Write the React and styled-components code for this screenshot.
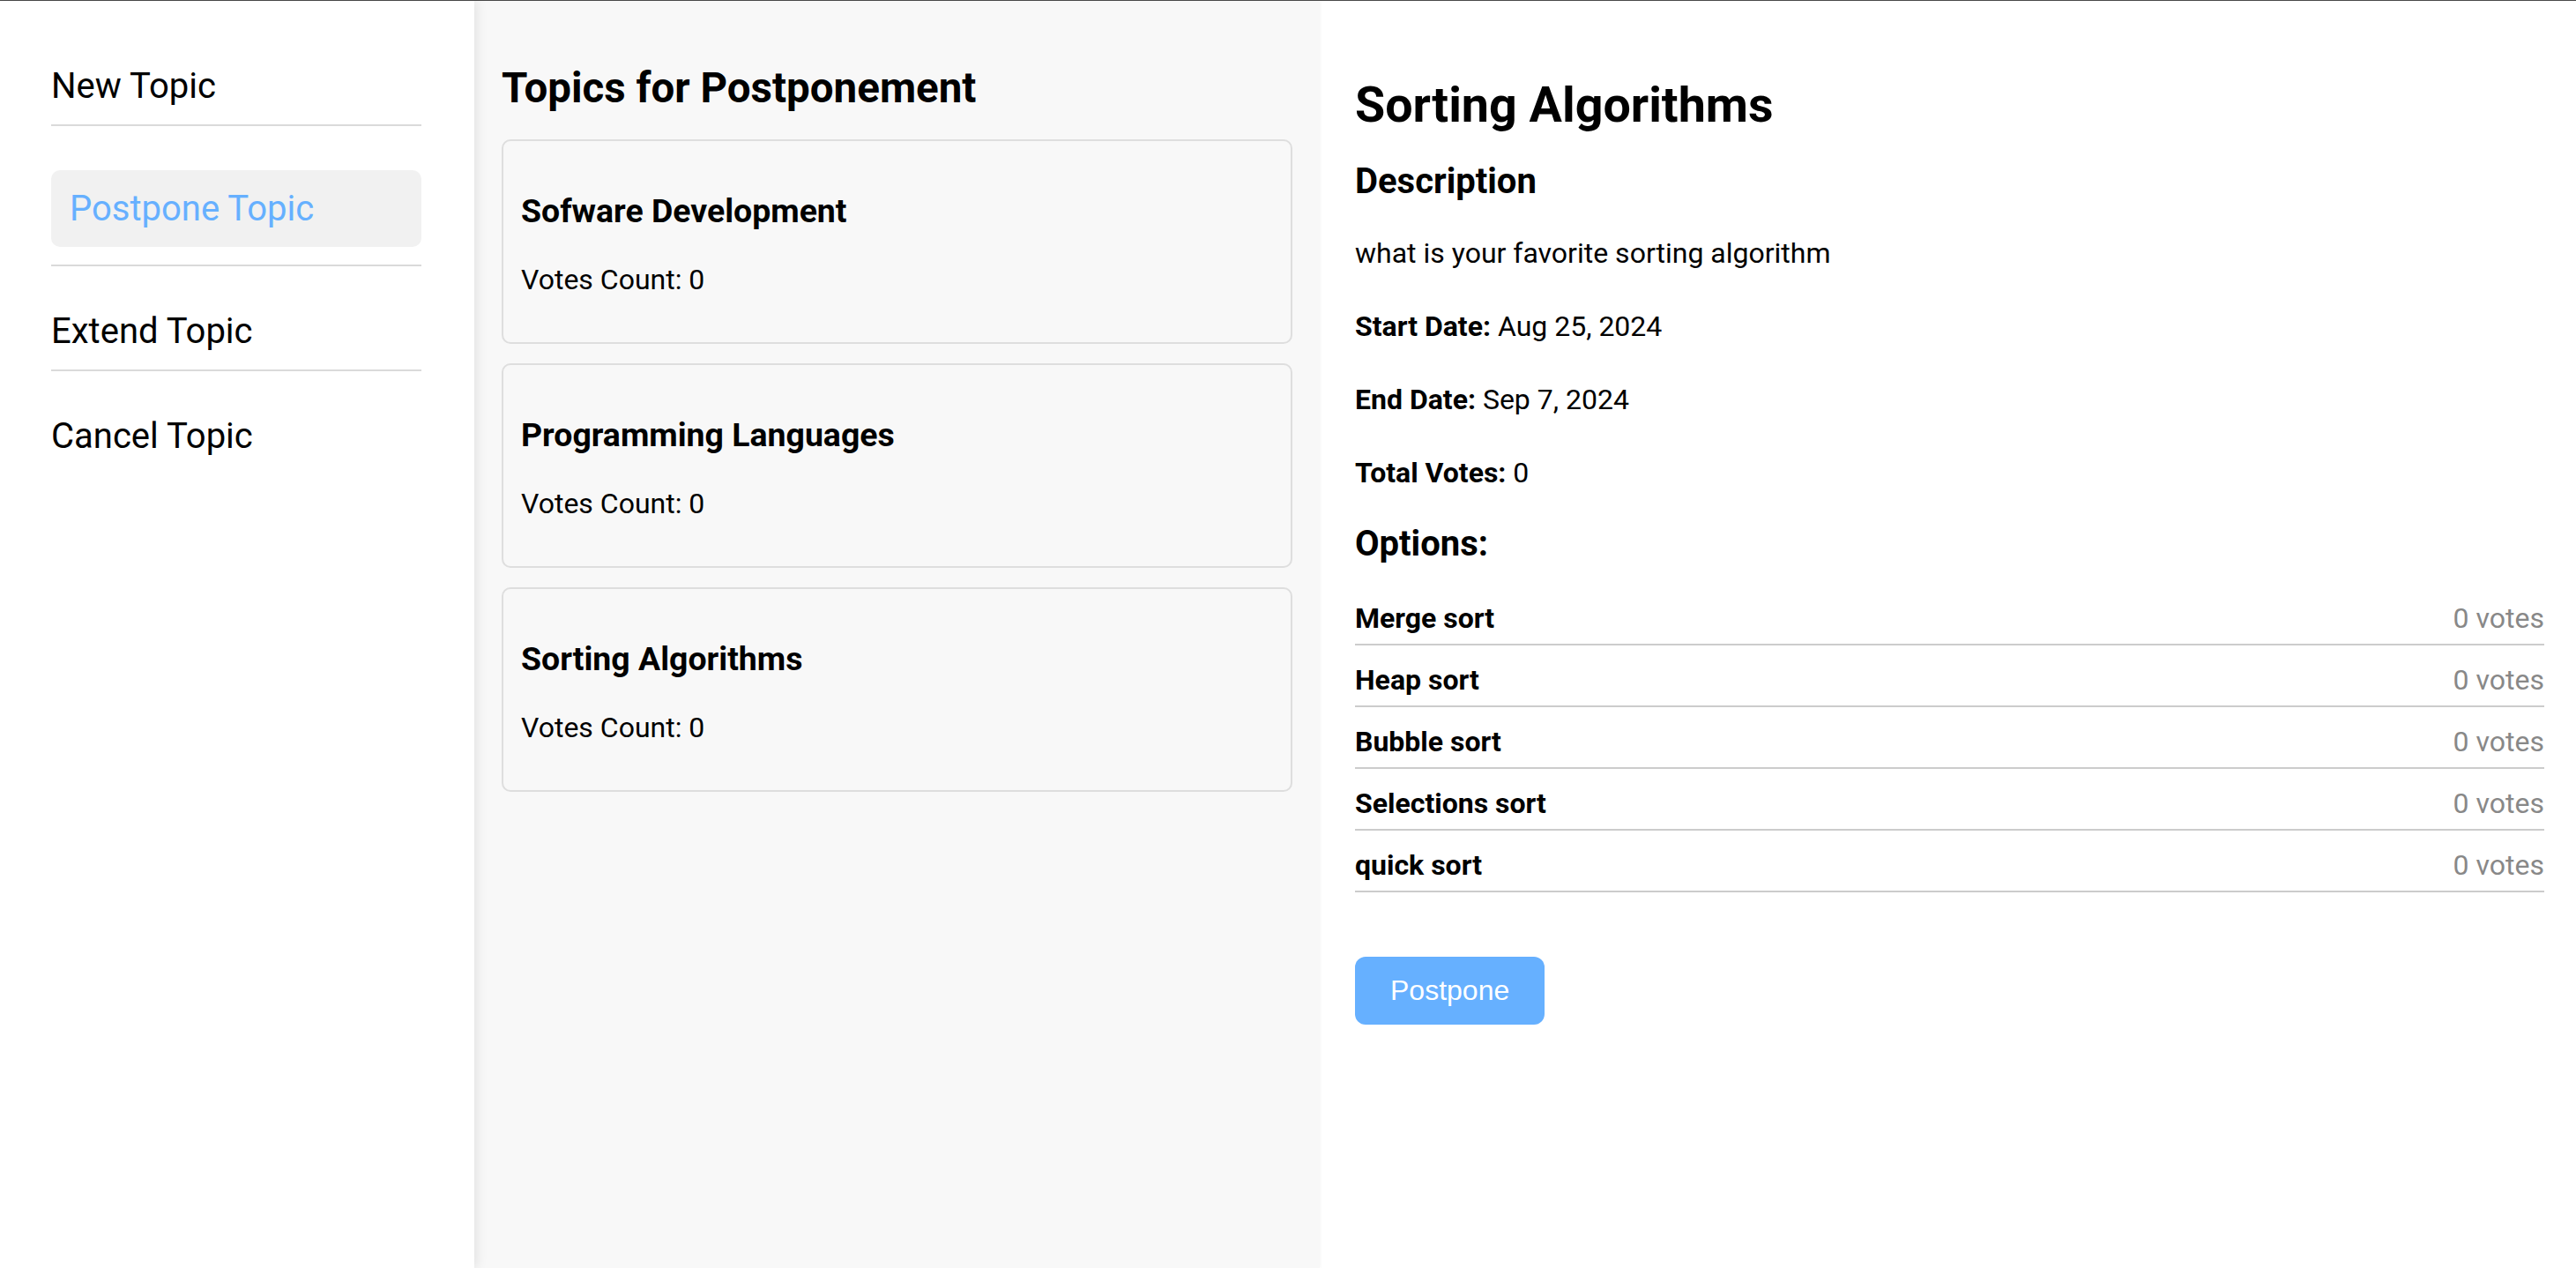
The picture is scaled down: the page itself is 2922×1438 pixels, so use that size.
import React from "react";
import styled, { createGlobalStyle } from "styled-components";

const GlobalStyle = createGlobalStyle`
  html, body { margin: 0; padding: 0; background: #ffffff; }
  body { font-family: Roboto, "Liberation Sans", Arial, sans-serif; color: #000; }
  * { box-sizing: border-box; }
`;

const Layout = styled.div`
  display: flex;
  min-height: 100vh;
  border-top: 1px solid #4a4a4a;
`;

const Sidebar = styled.nav`
  position: relative;
  z-index: 2;
  flex: 0 0 538px;
  background: #ffffff;
  padding: 23px 60px 0 58px;
  box-shadow: 3px 0 12px rgba(0, 0, 0, 0.09);
`;

const NavList = styled.ul`
  list-style: none;
  margin: 0;
  padding: 0;
`;

const NavItem = styled.li`
  padding: 50px 0 20px;
  border-bottom: 2px solid #dadada;
  &:last-child { border-bottom: none; }
`;

const NavLink = styled.a`
  display: block;
  font-size: 40px;
  line-height: normal;
  text-decoration: none;
  color: ${(p) => (p.$active ? "#66b0ff" : "#000000")};
  background: ${(p) => (p.$active ? "#f1f1f1" : "transparent")};
  border-radius: 10px;
  padding: ${(p) => (p.$active ? "20px 21px" : "0")};
  cursor: pointer;
`;

const ListPanel = styled.section`
  position: relative;
  z-index: 1;
  flex: 0 0 959px;
  background: #f8f8f8;
  padding: 71px 31px 40px;
  box-shadow: 1px 0 3px rgba(0, 0, 0, 0.04);
`;

const PanelTitle = styled.h2`
  margin: 0 0 30px;
  font-size: 47.5px;
  font-weight: 700;
  line-height: normal;
`;

const TopicCard = styled.div`
  border: 2px solid #dedede;
  border-radius: 10px;
  padding: 20px;
  margin-bottom: 22px;
  background: #f8f8f8;
  cursor: pointer;
`;

const CardTitle = styled.h3`
  margin: 37px 0;
  font-size: 37.44px;
  font-weight: 700;
  line-height: normal;
`;

const CardText = styled.p`
  margin: 32px 0;
  font-size: 32px;
  line-height: normal;
`;

const DetailPanel = styled.section`
  flex: 1 1 auto;
  background: #ffffff;
  padding: 85px 36px 40px 40px;
  display: flex;
  flex-direction: column;
  align-items: stretch;
`;

const DetailTitle = styled.h1`
  margin: 0 0 30px;
  font-size: 55.6px;
  font-weight: 700;
  line-height: normal;
`;

const SectionHeading = styled.h3`
  margin: 0 0 ${(p) => p.$after}px;
  font-size: 40px;
  font-weight: 700;
  line-height: normal;
`;

const InfoLine = styled.p`
  margin: 0 0 ${(p) => p.$after ?? 45}px;
  font-size: 32px;
  line-height: normal;
`;

const Label = styled.strong`
  font-weight: 700;
`;

const OptionList = styled.ul`
  list-style: none;
  margin: 0;
  padding: 0;
`;

const OptionRow = styled.li`
  display: flex;
  justify-content: space-between;
  align-items: baseline;
  padding: 10px 0;
  margin-bottom: 10px;
  border-bottom: 2px solid #cccccc;
  font-size: 32px;
  line-height: normal;
  &:last-child { margin-bottom: 0; }
`;

const OptionName = styled.span`
  font-weight: 700;
`;

const OptionVotes = styled.span`
  color: #888888;
`;

const ActionButton = styled.button`
  align-self: flex-start;
  margin-top: 73px;
  padding: 20px 40px;
  border: none;
  border-radius: 12px;
  background: #66b0ff;
  color: #ffffff;
  font-family: "Liberation Sans", Arial, sans-serif;
  font-size: 32px;
  line-height: normal;
  cursor: not-allowed;
`;

const navItems = ["New Topic", "Postpone Topic", "Extend Topic", "Cancel Topic"];
const topics = [
  { title: "Sofware Development", votes: 0 },
  { title: "Programming Languages", votes: 0 },
  { title: "Sorting Algorithms", votes: 0 },
];
const options = ["Merge sort", "Heap sort", "Bubble sort", "Selections sort", "quick sort"];

export default function App() {
  return (
    <>
      <GlobalStyle />
      <Layout>
        <Sidebar>
          <NavList>
            {navItems.map((item) => (
              <NavItem key={item}>
                <NavLink $active={item === "Postpone Topic"}>{item}</NavLink>
              </NavItem>
            ))}
          </NavList>
        </Sidebar>
        <ListPanel>
          <PanelTitle>Topics for Postponement</PanelTitle>
          {topics.map((t) => (
            <TopicCard key={t.title}>
              <CardTitle>{t.title}</CardTitle>
              <CardText>Votes Count: {t.votes}</CardText>
            </TopicCard>
          ))}
        </ListPanel>
        <DetailPanel>
          <DetailTitle>Sorting Algorithms</DetailTitle>
          <SectionHeading $after={39}>Description</SectionHeading>
          <InfoLine>what is your favorite sorting algorithm</InfoLine>
          <InfoLine>
            <Label>Start Date:</Label> Aug 25, 2024
          </InfoLine>
          <InfoLine>
            <Label>End Date:</Label> Sep 7, 2024
          </InfoLine>
          <InfoLine $after={38}>
            <Label>Total Votes:</Label> 0
          </InfoLine>
          <SectionHeading $after={32}>Options:</SectionHeading>
          <OptionList>
            {options.map((o) => (
              <OptionRow key={o}>
                <OptionName>{o}</OptionName>
                <OptionVotes>0 votes</OptionVotes>
              </OptionRow>
            ))}
          </OptionList>
          <ActionButton disabled>Postpone</ActionButton>
        </DetailPanel>
      </Layout>
    </>
  );
}
